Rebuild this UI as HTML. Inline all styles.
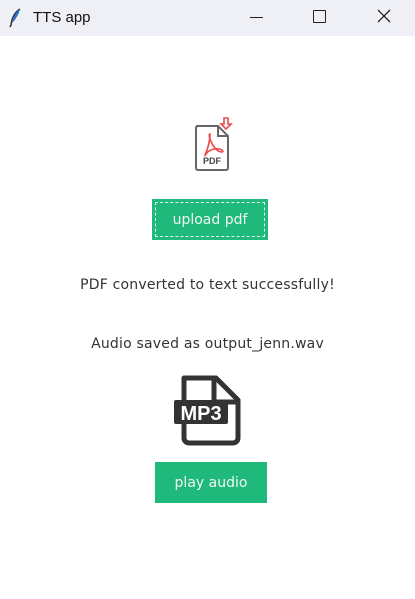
<!DOCTYPE html>
<html><head><style>
body{margin:0;width:415px;height:599px;background:#fff;font-family:"DejaVu Sans",sans-serif;position:relative;overflow:hidden}
.bar{position:absolute;left:0;top:0;width:415px;height:36px;background:#eff0f5;font-family:"Liberation Sans",sans-serif}
.t{position:absolute;font-size:14px;color:#333;white-space:nowrap;letter-spacing:0.2px}
.btn{position:absolute;background:#1eb97b;font-size:14px;display:flex;align-items:center;justify-content:center;color:#f0f8ef}
</style></head><body>
<div class="bar">
<svg style="position:absolute;left:8px;top:8px" width="14" height="20" viewBox="0 0 14 20"><path d="M12 1C7 4 4 9 3 17L2 19" stroke="#333" stroke-width="1.5" fill="none"/><path d="M12 1C9 3 5 8 4 15C8 11 11 6 12 1Z" fill="#2a6fd0"/></svg>
<div class="t" style="left:33px;top:9px;font-size:15px;color:#111;letter-spacing:0">TTS app</div>
<div style="position:absolute;left:250px;top:17px;width:13px;height:1px;background:#222"></div>
<div style="position:absolute;left:313px;top:10px;width:11px;height:11px;border:1.3px solid #222;border-radius:1px"></div>
<svg style="position:absolute;left:377px;top:9px" width="14" height="14"><path d="M1 1L13 13M13 1L1 13" stroke="#222" stroke-width="1.3"/></svg>
</div>
<svg style="position:absolute;left:190px;top:116px" width="48" height="58" viewBox="0 0 48 58">
<path d="M6 10h22l10 10v32a2 2 0 0 1-2 2H8a2 2 0 0 1-2-2V12a2 2 0 0 1 2-2z" fill="#fff" stroke="#666" stroke-width="2"/>
<path d="M28 10v10h10" fill="none" stroke="#666" stroke-width="2"/>
<path d="M34 2h4v6h3l-5 5-5-5h3z" fill="#fff" stroke="#e84a4a" stroke-width="1.6"/>
<path d="M20 18c-2 0 0 8 5 14s10 4 7 2-12-2-16 4 4-6 4-20z" fill="none" stroke="#ee4444" stroke-width="1.6"/>
<text x="22" y="48" font-size="9" font-weight="bold" fill="#444" text-anchor="middle" font-family="Liberation Sans">PDF</text>
</svg>
<div class="btn" style="left:152px;top:199px;width:116px;height:41px"><div style="position:absolute;left:3px;top:3px;right:3px;bottom:3px;border:1px dashed #e8f5ec"></div>upload pdf</div>
<div class="t" style="left:0;width:415px;text-align:center;top:277px">PDF converted to text successfully!</div>
<div class="t" style="left:0;width:415px;text-align:center;top:336px">Audio saved as output_jenn.wav</div>
<svg style="position:absolute;left:170px;top:372px" width="76" height="76" viewBox="0 0 76 76">
<path d="M14 6h32l22 22v38a5 5 0 0 1-5 5H19a5 5 0 0 1-5-5z" fill="#fff" stroke="#333" stroke-width="5" stroke-linejoin="round"/>
<path d="M44 6v24h24" fill="none" stroke="#333" stroke-width="5"/>
<rect x="4" y="28" width="54" height="24" rx="2" fill="#333"/>
<text x="31" y="48" font-size="20" font-weight="bold" fill="#fff" text-anchor="middle" font-family="Liberation Sans">MP3</text>
</svg>
<div class="btn" style="left:155px;top:462px;width:112px;height:41px">play audio</div>
</body></html>
